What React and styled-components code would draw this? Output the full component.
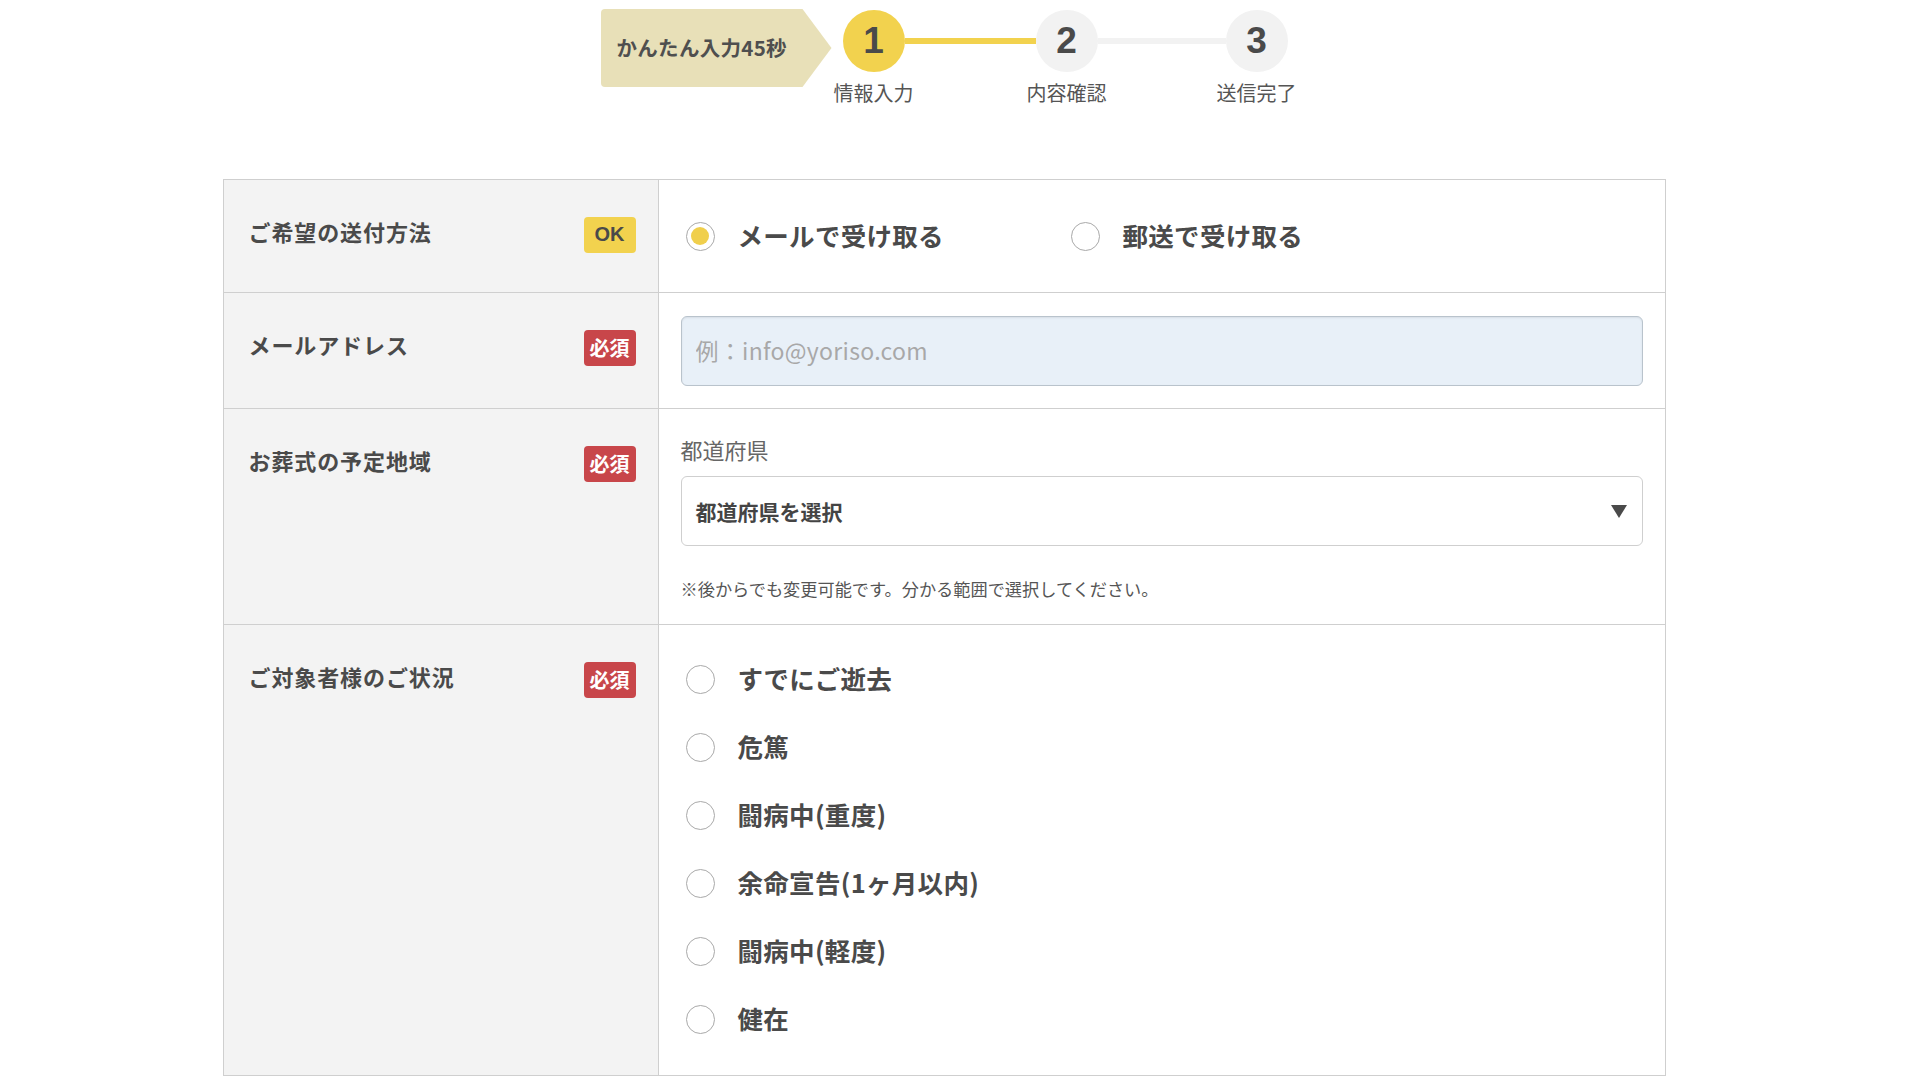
import React from 'react';
import styled, { createGlobalStyle } from 'styled-components';

const GlobalStyle = createGlobalStyle`
  html, body {
    margin: 0;
    padding: 0;
    background: #fff;
  }
  body {
    font-family: "Noto Sans CJK JP", "Noto Sans", sans-serif;
    color: #4a4a4a;
  }
  * {
    box-sizing: border-box;
  }
`;

const Page = styled.div`
  width: 1888px;
  padding-top: 9px;

  display: flex;
  flex-direction: column;
  align-items: center;
`;

const Stepper = styled.div`
  display: flex;
  align-items: flex-start;
`;

const Tag = styled.div`
  width: 231px;
  height: 78px;
  margin-right: 11px;
  padding: 0 0 3px 16px;

  display: flex;
  align-items: center;

  background: #e8e0b8;
  border-radius: 4px 0 0 4px;
  clip-path: polygon(0 0, 202px 0, 100% 50%, 202px 100%, 0 100%);

  font-size: 20.5px;
  font-weight: 700;
  color: #4f4f4f;
  letter-spacing: 0.3px;
`;

const Steps = styled.div`
  margin-top: 1px;

  display: flex;
  align-items: flex-start;
`;

const Step = styled.div`
  width: 62px;

  display: flex;
  flex-direction: column;
  align-items: center;
`;

const Circle = styled.div`
  width: 62px;
  height: 62px;

  display: flex;
  align-items: center;
  justify-content: center;

  border-radius: 50%;
  background: ${p => (p.$active ? '#f2d24e' : '#f2f2f2')};

  font-family: "Liberation Sans", Arial, sans-serif;
  font-size: 37px;
  font-weight: 700;
  color: #4a4a4a;
`;

const StepLabel = styled.div`
  margin-top: 7px;

  white-space: nowrap;
  font-size: 20px;
  line-height: 28px;
  color: #555;
`;

const Connector = styled.div`
  width: ${p => p.$width}px;
  height: 6px;
  margin-top: 28px;

  background: ${p => (p.$done ? '#f2d24e' : '#f2f2f2')};
`;

const Form = styled.div`
  width: 1443px;
  margin-top: 72px;

  border: solid 1px #cfcfcf;
`;

const Row = styled.div`
  display: grid;
  grid-template-columns: 435px 1fr;

  & + & {
    border-top: solid 1px #cfcfcf;
  }
`;

const LabelCell = styled.div`
  padding: 37px 22px 0 25px;

  display: flex;
  align-items: flex-start;
  justify-content: space-between;

  background: #f3f3f3;
  border-right: solid 1px #cfcfcf;
`;

const LabelText = styled.div`
  margin-top: -4px;

  font-size: 22px;
  line-height: 36px;
  font-weight: 700;
  letter-spacing: 0.9px;
  color: #4a4a4a;
`;

const Badge = styled.span`
  width: 52px;
  height: 36px;
  padding-bottom: 1px;

  display: flex;
  align-items: center;
  justify-content: center;

  border-radius: 4px;
  background: ${p => (p.$ok ? '#f2d24e' : '#c8464a')};

  font-family: ${p => (p.$ok ? '"Liberation Sans", Arial, sans-serif' : 'inherit')};
  font-size: 20px;
  font-weight: 700;
  color: ${p => (p.$ok ? '#4a4a4a' : '#fff')};
`;

const FieldCell = styled.div`
  padding: ${p => p.$pad || '22px 22px'};
`;

const InlineOptions = styled.div`
  display: grid;
  grid-template-columns: 385px auto;
  justify-content: start;
`;

const StackOptions = styled.div`
  display: flex;
  flex-direction: column;
`;

const Option = styled.label`
  height: 68px;
  padding-left: 5px;

  display: flex;
  align-items: center;
  gap: 23px;

  cursor: pointer;
`;

const RadioMark = styled.span`
  width: 29px;
  height: 29px;
  flex: none;

  display: flex;
  align-items: center;
  justify-content: center;

  border: solid 1px #a9a9a9;
  border-radius: 50%;
  background: #fff;

  &::after {
    content: '';
    width: 18px;
    height: 18px;
    border-radius: 50%;
    background: ${p => (p.$checked ? '#f0cf4c' : 'transparent')};
  }
`;

const OptionText = styled.span`
  padding-bottom: 4px;

  font-size: 25.5px;
  font-weight: 700;
  letter-spacing: 0.3px;
  color: #4a4a4a;
  white-space: nowrap;
`;

const TextInput = styled.input`
  width: 100%;
  height: 70px;
  padding: 0 14px 3px;

  border: solid 1px #b9c3cc;
  border-radius: 6px;
  background: #e8f0f8;
  box-shadow: inset 0 1px 2px rgba(0, 0, 0, 0.08);
  outline: none;

  font-family: inherit;
  font-size: 23px;
  letter-spacing: 0.3px;
  color: #4a4a4a;

  &::placeholder {
    color: #a8a8a8;
  }
`;

const SubLabel = styled.div`
  font-size: 22px;
  line-height: 36px;
  color: #666;
`;

const Select = styled.div`
  height: 70px;
  margin-top: 9px;
  padding: 0 15px 0 14px;

  display: flex;
  align-items: center;
  justify-content: space-between;

  border: solid 1px #cfcfcf;
  border-radius: 6px;
  background: #fff;

  font-size: 21px;
  font-weight: 700;
  color: #444;
`;

const Note = styled.div`
  margin-top: 30px;

  font-size: 17.2px;
  line-height: 26px;
  color: #555;
`;

const Radio = ({ label, checked }) => (
  <Option>
    <RadioMark $checked={checked} />
    <OptionText>{label}</OptionText>
  </Option>
);

const statuses = [
  'すでにご逝去',
  '危篤',
  '闘病中(重度)',
  '余命宣告(1ヶ月以内)',
  '闘病中(軽度)',
  '健在'
];

export default function App() {
  return (
    <>
      <GlobalStyle />
      <Page>
        <Stepper>
          <Tag>かんたん入力45秒</Tag>
          <Steps>
            <Step>
              <Circle $active>1</Circle>
              <StepLabel>情報入力</StepLabel>
            </Step>
            <Connector $done $width={131} />
            <Step>
              <Circle>2</Circle>
              <StepLabel>内容確認</StepLabel>
            </Step>
            <Connector $width={128} />
            <Step>
              <Circle>3</Circle>
              <StepLabel>送信完了</StepLabel>
            </Step>
          </Steps>
        </Stepper>

        <Form>
          <Row>
            <LabelCell>
              <LabelText>ご希望の送付方法</LabelText>
              <Badge $ok>OK</Badge>
            </LabelCell>
            <FieldCell>
              <InlineOptions>
                <Radio label="メールで受け取る" checked />
                <Radio label="郵送で受け取る" />
              </InlineOptions>
            </FieldCell>
          </Row>

          <Row>
            <LabelCell>
              <LabelText>メールアドレス</LabelText>
              <Badge>必須</Badge>
            </LabelCell>
            <FieldCell $pad="23px 22px 22px">
              <TextInput type="email" placeholder="例：info@yoriso.com" />
            </FieldCell>
          </Row>

          <Row>
            <LabelCell>
              <LabelText>お葬式の予定地域</LabelText>
              <Badge>必須</Badge>
            </LabelCell>
            <FieldCell>
              <SubLabel>都道府県</SubLabel>
              <Select>
                <span>都道府県を選択</span>
                <svg width="16" height="13" viewBox="0 0 16 13">
                  <polygon points="0,0 16,0 8,13" fill="#4a4a4a" />
                </svg>
              </Select>
              <Note>※後からでも変更可能です。分かる範囲で選択してください。</Note>
            </FieldCell>
          </Row>

          <Row>
            <LabelCell>
              <LabelText>ご対象者様のご状況</LabelText>
              <Badge>必須</Badge>
            </LabelCell>
            <FieldCell $pad="20px 22px 22px">
              <StackOptions>
                {statuses.map(s => (
                  <Radio key={s} label={s} />
                ))}
              </StackOptions>
            </FieldCell>
          </Row>
        </Form>
      </Page>
    </>
  );
}
